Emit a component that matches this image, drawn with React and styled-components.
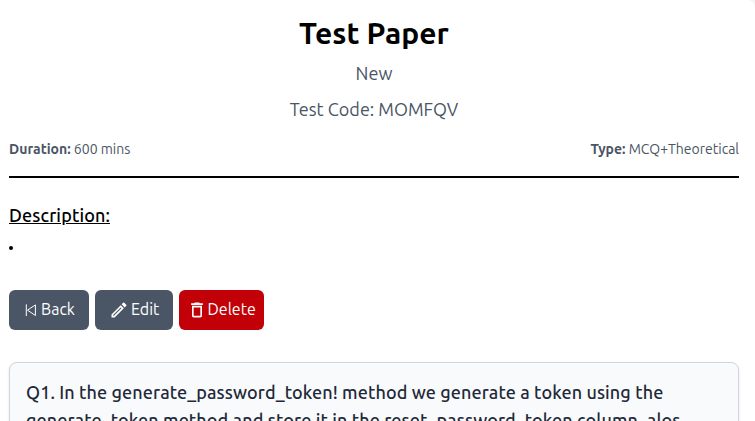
import React from "react";
import styled, { createGlobalStyle } from "styled-components";
import { MdOutlineModeEdit, MdDeleteOutline } from "react-icons/md";

const GlobalStyle = createGlobalStyle`
  *, *::before, *::after { box-sizing: border-box; }
  body {
    margin: 0;
    overflow: hidden;
    background: #f3f4f6;
    font-family: Ubuntu, "Noto Sans", sans-serif;
    color: #000;
  }
  h1, h2, p { margin: 0; }
`;

const Paper = styled.main`
  height: 421px;
  padding: 15px 16px 0 9px;
  overflow: hidden;
  background: #fff;
  border-top-right-radius: 8px;
`;

const Header = styled.header`
  display: flex;
  flex-direction: column;
  align-items: center;
  color: #4a5565;
`;

const Title = styled.h1`
  font-size: 30px;
  font-weight: 700;
  line-height: 36px;
  color: #000;
  white-space: nowrap;
`;

const Subtitle = styled.p`
  margin-top: 8px;
  font-size: 18px;
  font-weight: 400;
  line-height: 28px;
`;

const MetaRow = styled.div`
  display: flex;
  justify-content: space-between;
  margin-top: 16px;
  padding-bottom: 17px;
  border-bottom: 2px solid #000;
  font-size: 14px;
  line-height: 20px;
  color: #4a5565;
`;

const Meta = styled.p`
  strong { font-weight: 700; }
`;

const SectionTitle = styled.h2`
  margin-top: 23px;
  font-size: 18px;
  font-weight: 500;
  line-height: 28px;
  letter-spacing: 0.12px;
  text-decoration: underline;
`;

const Notes = styled.ul`
  display: flex;
  height: 33px;
  margin: 0;
  padding: 17px 0 0;
  list-style: none;
`;

const Note = styled.li`
  width: 4px;
  height: 4px;
  border-radius: 50%;
  background: #000;
`;

const Actions = styled.div`
  display: flex;
  gap: 6px;
  margin-top: 28px;
`;

const Button = styled.button`
  display: flex;
  align-items: center;
  gap: ${(p) => p.$gap}px;
  width: ${(p) => p.$width}px;
  height: 40px;
  padding: 0 0 0 ${(p) => p.$inset}px;
  border: 0;
  border-radius: 6px;
  background: ${(p) => (p.$danger ? "#c10007" : "#4a5565")};
  color: #fff;
  font: 400 16px/24px Ubuntu, "Noto Sans", sans-serif;
  white-space: nowrap;
`;

const Label = styled.span`
  padding-bottom: 2px;
`;

const Question = styled.section`
  height: 120px;
  margin-top: 32px;
  padding: 15px 16px;
  border: 1px solid #d1d5dc;
  border-radius: 8px;
  background: #f9fafb;
  box-shadow: 0 1px 3px rgba(0, 0, 0, 0.1);
`;

const QuestionText = styled.p`
  font-size: 18px;
  font-weight: 500;
  line-height: 28px;
  letter-spacing: 0.1px;
  color: #1e2939;
`;

function SkipBackIcon() {
  return (
    <svg width="20" height="20" viewBox="0 0 20 20" fill="none" stroke="currentColor" strokeWidth="1" strokeLinejoin="round" aria-hidden="true">
      <path d="M5.3 4.4V16M14.4 4.9V15.5L6.5 10.2Z" />
    </svg>
  );
}

export default function App() {
  return (
    <>
      <GlobalStyle />
      <Paper>
        <Header>
          <Title>Test Paper</Title>
          <Subtitle>New</Subtitle>
          <Subtitle>Test Code: MOMFQV</Subtitle>
        </Header>
        <MetaRow>
          <Meta><strong>Duration:</strong> 600 mins</Meta>
          <Meta><strong>Type:</strong> MCQ+Theoretical</Meta>
        </MetaRow>
        <SectionTitle>Description:</SectionTitle>
        <Notes><Note /></Notes>
        <Actions>
          <Button $width={80} $inset={12} $gap={0}><SkipBackIcon /><Label>Back</Label></Button>
          <Button $width={78} $inset={14} $gap={2}><MdOutlineModeEdit size={20} /><Label>Edit</Label></Button>
          <Button $width={85} $inset={8} $gap={0.5} $danger><MdDeleteOutline size={20} /><Label>Delete</Label></Button>
        </Actions>
        <Question>
          <QuestionText>
            Q1. In the generate_password_token! method we generate a token using the
            generate_token method and store it in the reset_password_token column, alos
          </QuestionText>
        </Question>
      </Paper>
    </>
  );
}
